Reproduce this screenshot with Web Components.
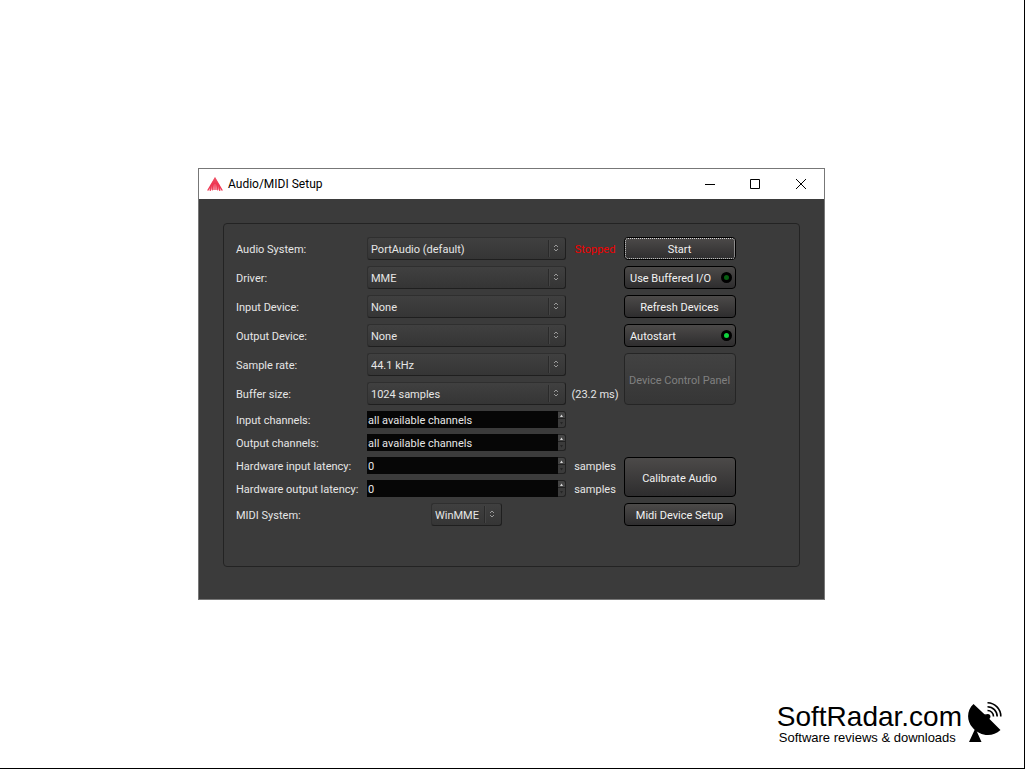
<!DOCTYPE html>
<html lang="en">
<head>
<meta charset="utf-8">
<title>Audio/MIDI Setup</title>
<style>
  html, body { height: 100%; }
  body {
    margin: 0;
    box-sizing: border-box;
    background: #fff;
    border-right: 1px solid #000;
    border-bottom: 1px solid #000;
    font-family: Roboto, "Noto Sans", sans-serif;
  }
</style>
</head>
<body>
<desk-page>
  <app-window heading="Audio/MIDI Setup">
    <setup-panel>
      <combo-row label="Audio System:" value="PortAudio (default)" style="--row:1"><span class="alert">Stopped</span></combo-row>
      <combo-row label="Driver:" value="MME" style="--row:2"></combo-row>
      <combo-row label="Input Device:" value="None" style="--row:3"></combo-row>
      <combo-row label="Output Device:" value="None" style="--row:4"></combo-row>
      <combo-row label="Sample rate:" value="44.1 kHz" style="--row:5"></combo-row>
      <combo-row label="Buffer size:" value="1024 samples" style="--row:6">(23.2 ms)</combo-row>
      <spin-row label="Input channels:" value="all available channels" style="--row:7"></spin-row>
      <spin-row label="Output channels:" value="all available channels" style="--row:8"></spin-row>
      <spin-row label="Hardware input latency:" value="0" style="--row:9">samples</spin-row>
      <spin-row label="Hardware output latency:" value="0" style="--row:10">samples</spin-row>
      <combo-row compact label="MIDI System:" value="WinMME" style="--row:11"></combo-row>

      <push-button focused style="--row:1">Start</push-button>
      <push-button led="off" style="--row:2">Use Buffered I/O</push-button>
      <push-button style="--row:3">Refresh Devices</push-button>
      <push-button led="on" style="--row:4">Autostart</push-button>
      <push-button disabled style="--row:5 / span 2">Device Control Panel</push-button>
      <push-button style="--row:9 / span 2">Calibrate Audio</push-button>
      <push-button style="--row:11">Midi Device Setup</push-button>
    </setup-panel>
  </app-window>
  <radar-brand slot="footer"></radar-brand>
</desk-page>

<script>
const define = (name, render) => customElements.define(name, class extends HTMLElement {
  connectedCallback() {
    if (this.shadowRoot) return;
    this.attachShadow({ mode: "open" }).innerHTML = render(this);
  }
});

define("desk-page", () => `
  <style>
    :host { display: grid; grid-template-rows: 1fr auto 1fr; min-height: 100%; padding-right: 1px; box-sizing: border-box; }
    main { display: flex; justify-content: center; grid-row: 2; }
    footer { grid-row: 3; align-self: end; display: flex; justify-content: flex-end; padding: 0 21px 24px; }
  </style>
  <main><slot></slot></main>
  <footer><slot name="footer"></slot></footer>`);

define("app-window", el => `
  <style>
    :host { display: block; border: 1px solid #777; background: #3b3b3b; }
    header { display: flex; align-items: center; height: 30px; background: #fff; color: #000; padding-left: 8px; }
    h1 { margin: 0 auto 0 5px; font-size: 12px; line-height: 16px; font-weight: 400; }
    header button { width: 46px; height: 30px; padding: 0; border: 0; background: none; display: grid; place-items: center; }
    svg { display: block; }
    .body { padding: 24px 24px 32px; }
  </style>
  <header>
    <svg width="16" height="16" viewBox="0 0 16 16" aria-hidden="true">
      <defs><linearGradient id="g" x2="0" y2="1"><stop offset="0" stop-color="#f0707c"/><stop offset=".5" stop-color="#ee3350"/><stop offset="1" stop-color="#f0405a"/></linearGradient></defs>
      <path d="M8 1 L16 14.500 H14.200 L13.500 12 L13.300 15 H12.200 L11.300 10 L11.100 14.500 H10.300 L9.600 8.500 L9.200 14 H8.700 L8.200 8 H7.800 L7.300 14 H6.800 L6.400 8.500 L5.700 14.500 H4.900 L4.700 10 L3.800 15 H2.700 L2.500 12 L1.800 14.500 H0 Z" fill="url(#g)"/>
      <path d="M3.200 9.500 L8 1 L12.800 9.500 L11.500 14 L4.500 14 Z" fill="#ee3a55" fill-opacity=".5"/>
    </svg>
    <h1>${el.getAttribute("heading")}</h1>
    <button aria-label="Minimize"><svg width="12" height="12"><path d="M2 6.500h10" stroke="#000" fill="none"/></svg></button>
    <button aria-label="Maximize"><svg width="12" height="12"><path d="M1.500 1.500h9v9h-9z" stroke="#000" fill="none"/></svg></button>
    <button aria-label="Close"><svg width="12" height="12"><path d="M1 1l10 10M11 1L1 11" stroke="#000" fill="none"/></svg></button>
  </header>
  <div class="body"><slot></slot></div>`);

define("setup-panel", () => `
  <style>
    :host {
      display: grid;
      grid-template-columns: 131px 199px 58px 112px;
      grid-template-rows: repeat(6, 23px) repeat(4, 17px) 23px;
      row-gap: 6px;
      padding: 13px 63px 40px 12px;
      border: 1px solid #232323;
      border-radius: 4px;
      color: #e6e6e6;
      font-size: 11px;
      line-height: 15px;
    }
    ::slotted(push-button) { grid-column: 4; grid-row: var(--row); }
  </style>
  <slot></slot>`);

const rowStyle = `
  :host { display: contents; }
  * { box-sizing: border-box; font: inherit; color: inherit; }
  label { grid-row: var(--row); grid-column: 1; align-self: center; padding-top: 2px; white-space: nowrap; }
  .field { grid-row: var(--row); grid-column: 2; display: grid; }
  .note { grid-row: var(--row); grid-column: 3; align-self: center; padding-top: 2px; text-align: center; white-space: nowrap; }
  ::slotted(.alert) { color: #f00000; }
`;

define("combo-row", el => `
  <style>
    ${rowStyle}
    select {
      grid-area: 1 / 1; appearance: none; margin: 0; padding: 2px 20px 0 3px; width: 100%; height: 23px;
      border: 1px solid #2f2f2f; border-right-color: #1f1f1f; border-bottom-color: #1f1f1f; border-radius: 3px;
      background: linear-gradient(#404040, #353535); outline: none;
    }
    .mark { grid-area: 1 / 1; justify-self: end; align-self: center; pointer-events: none; display: block; }
    :host([compact]) .field { justify-self: center; width: 71px; }
  </style>
  <label for="c">${el.getAttribute("label")}</label>
  <div class="field">
    <select id="c"><option>${el.getAttribute("value")}</option></select>
    <svg class="mark" width="18" height="17" aria-hidden="true">
      <path d="M0.500 0v17" stroke="#2a2a2a"/><path d="M1.500 0v17" stroke="#444"/>
      <path d="M6 7l2-2L10 7M6 9L8 11L10 9" fill="none" stroke="#999"/>
    </svg>
  </div>
  <div class="note"><slot></slot></div>`);

define("spin-row", el => `
  <style>
    ${rowStyle}
    .field { grid-template-columns: 1fr 8px; background: #060606; }
    input { min-width: 0; width: 100%; height: 17px; margin: 0; padding: 2px 1px 0; border: 0; background: none; outline: none; }
    .steps { display: grid; grid-template-rows: 8px 9px; background: #3b3b3b; }
    button { margin: 0; padding: 0; border: 1px solid #232323; border-left: 0; background: #454545; display: grid; place-items: center; }
    button:first-child { border-radius: 0 3px 0 0; }
    button:last-child { border-top: 0; border-radius: 0 0 3px 0; background: #3b3b3b; }
    svg { display: block; }
  </style>
  <label for="s">${el.getAttribute("label")}</label>
  <div class="field">
    <input id="s" type="text" value="${el.getAttribute("value")}">
    <div class="steps">
      <button aria-label="Increase"><svg width="5" height="3"><path d="M1 3L2.500 0.500L4 3z" fill="#d8d8d8"/></svg></button>
      <button aria-label="Decrease"><svg width="5" height="3"><path d="M1 0L2.500 2.500L4 0z" fill="#262626"/></svg></button>
    </div>
  </div>
  <div class="note"><slot></slot></div>`);

define("push-button", el => {
  const led = el.getAttribute("led");
  return `
  <style>
    :host { display: grid; }
    button {
      display: flex; align-items: center; justify-content: center; width: 100%; margin: 0; padding: 0 1px 0 0;
      font: inherit; color: #f2f2f2; white-space: nowrap; box-sizing: border-box;
      border: 1px solid #000; border-radius: 4px; background: linear-gradient(#4c4a49, #2e2d2e); outline: none;
    }
    span { padding-top: 2px; }
    :host([led]) button { justify-content: space-between; padding: 0 3px 0 5px; }
    :host([disabled]) button { color: #808080; border-color: #252525; background: linear-gradient(#424242, #363636); }
    :host([focused]) button { position: relative; }
    :host([focused]) button::after { content: ""; position: absolute; inset: 0; border: 1px dotted #d8d8d8; border-radius: 3px; }
    i { width: 5px; height: 5px; border: 3px solid #000; border-radius: 50%; background: #075f12; }
    :host([led="on"]) i { background: #0fd23c; }
  </style>
  <button ${el.hasAttribute("disabled") ? "disabled" : ""} ${led ? `aria-pressed="${led === "on"}"` : ""}><span><slot></slot></span>${led ? "<i></i>" : ""}</button>`;
});

define("radar-brand", () => `
  <style>
    :host { display: flex; align-items: flex-end; gap: 5px; color: #000; font-family: "Liberation Sans", Arial, sans-serif; }
    p { margin: 0; }
    .name { font-size: 28px; line-height: 28px; }
    .tag { font-size: 13px; line-height: 13px; padding-left: 2px; }
    svg { display: block; }
  </style>
  <div><p class="name">SoftRadar.com</p><p class="tag">Software reviews &amp; downloads</p></div>
  <svg width="35" height="44" viewBox="1 0 35 44" aria-hidden="true">
    <path d="M7.500 4C1 10 0 20 6.500 27.500C13.500 36 26 38 34.500 30L23.500 19Z"/>
    <circle cx="21.800" cy="16.500" r="2.600"/><path d="M18 14l4 1l1 5z"/>
    <path d="M9.500 28L11.500 33L15.500 42H3Z"/>
    <path d="M21.500 10.500A5.900 5.900 0 0 1 27.500 16.500M21.500 6.700A9.700 9.700 0 0 1 31.200 16.500M21.500 2.800A13.500 13.500 0 0 1 34.800 16.500" fill="none" stroke="#000" stroke-width="1.600"/>
  </svg>`);
</script>
</body>
</html>
